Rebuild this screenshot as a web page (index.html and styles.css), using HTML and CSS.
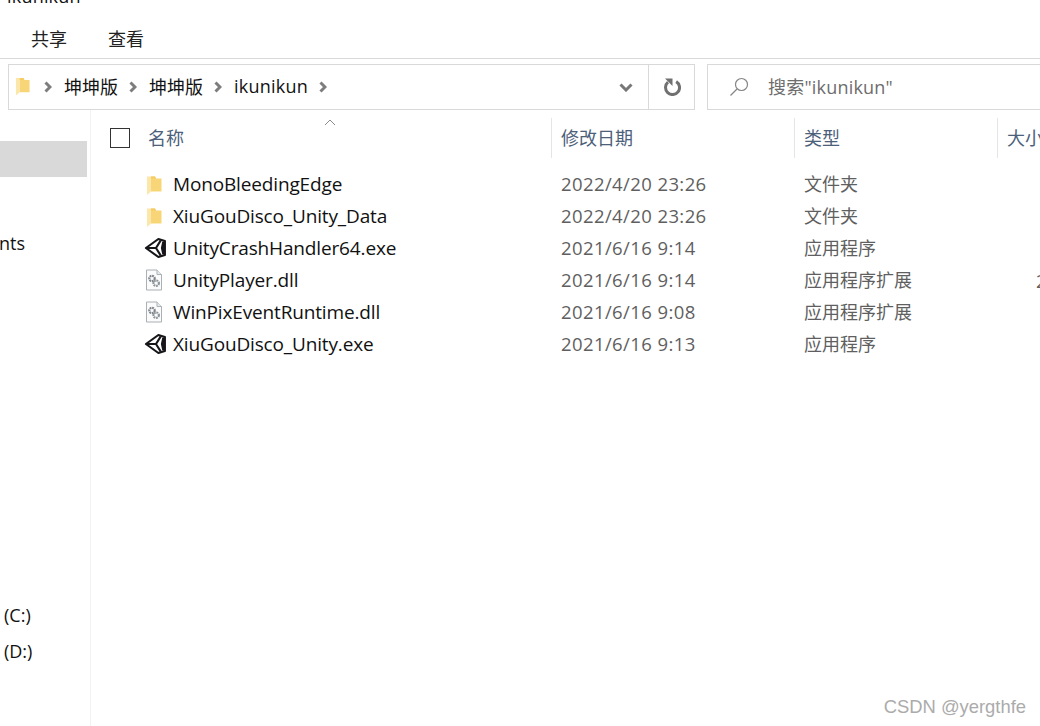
FILE: index.html
```html
<!DOCTYPE html>
<html lang="zh-CN">
<head>
<meta charset="utf-8">
<title>ikunikun</title>
<link rel="stylesheet" href="styles.css">
</head>
<body>
<svg class="defs" width="0" height="0" aria-hidden="true">
  <defs>
    <symbol id="folder" viewBox="0 0 16 20">
      <path d="M1 1 L5 1 L5 16 L1 19.5 Z" fill="#fbe7a9"/>
      <path d="M5 1 L9 1 L10 3 L15.5 3 L15.5 16 L5 16 Z" fill="#f8d577"/>
      <path d="M5 1 L9 1 L10 3 L5 3 Z" fill="#f6cb60"/>
    </symbol>
    <symbol id="unity" viewBox="0 0 24 22">
      <path d="M2 11 L15 1.6 L21.8 3.6 L21.8 18.4 L15 20.4 Z" fill="#fff" stroke="#15151a" stroke-width="2.2" stroke-linejoin="round"/>
      <path d="M2 11 H12.5 L17.5 3 M12.5 11 L17.5 19" fill="none" stroke="#15151a" stroke-width="2.2"/>
      <path d="M19 4.5 L21.8 3.6 L21.8 18.4 L19 17.5 L17.6 11 Z" fill="#15151a"/>
    </symbol>
    <symbol id="dll" viewBox="0 0 18 22">
      <path d="M1.5 1 H12 L16.5 5.5 V21 H1.5 Z" fill="#fbfbfb" stroke="#a9b0b6"/>
      <path d="M12 1 V5.5 H16.5" fill="#e8ebed" stroke="#a9b0b6"/>
      <circle cx="7" cy="9.5" r="2.7" fill="none" stroke="#7f858b" stroke-width="2.2" stroke-dasharray="1.8 .7"/>
      <circle cx="11.2" cy="14.2" r="2.7" fill="none" stroke="#8f959a" stroke-width="2.2" stroke-dasharray="1.8 .7"/>
    </symbol>
  </defs>
</svg>
<div class="window">
  <div class="titlebar"><span class="title-text">ikunikun</span></div>
  <nav class="ribbon">
    <span class="tab">共享</span>
    <span class="tab">查看</span>
  </nav>
  <div class="toolbar">
    <div class="address">
      <svg class="addr-folder"><use href="#folder"/></svg>
      <div class="crumbs">
        <svg class="chev" viewBox="0 0 8 12"><path d="M1.5 1.5 L6 6 L1.5 10.5" fill="none" stroke="#7d7d7d" stroke-width="3"/></svg>
        <span class="crumb">坤坤版</span>
        <svg class="chev" viewBox="0 0 8 12"><path d="M1.5 1.5 L6 6 L1.5 10.5" fill="none" stroke="#7d7d7d" stroke-width="3"/></svg>
        <span class="crumb">坤坤版</span>
        <svg class="chev" viewBox="0 0 8 12"><path d="M1.5 1.5 L6 6 L1.5 10.5" fill="none" stroke="#7d7d7d" stroke-width="3"/></svg>
        <span class="crumb crumb-latin">ikunikun</span>
        <svg class="chev" viewBox="0 0 8 12"><path d="M1.5 1.5 L6 6 L1.5 10.5" fill="none" stroke="#7d7d7d" stroke-width="3"/></svg>
      </div>
      <div class="addr-drop">
        <svg class="drop-icon" viewBox="0 0 14 9"><path d="M1.5 1.5 L7 7 L12.5 1.5" fill="none" stroke="#777" stroke-width="3"/></svg>
      </div>
      <div class="addr-refresh">
        <svg class="refresh-icon" viewBox="0 0 18 18"><path d="M5 4.2 A7 7 0 1 0 13.2 3.6" fill="none" stroke="#707070" stroke-width="3"/><path d="M2 .5 H9.5 V8 Z" fill="#707070"/></svg>
      </div>
    </div>
    <div class="search">
      <svg class="search-icon" viewBox="0 0 20 20"><circle cx="12.5" cy="7.5" r="6" fill="none" stroke="#858585" stroke-width="1.2"/><path d="M8 12 L1.5 18.5" stroke="#858585" stroke-width="1.3"/></svg>
      <span class="search-text">搜索"ikunikun"</span>
    </div>
  </div>
  <div class="body">
    <aside class="sidebar">
      <div class="side-selected"></div>
      <div class="side-item side-docs">nts</div>
      <div class="side-drives">
        <div class="side-item">(C:)</div>
        <div class="side-item">(D:)</div>
      </div>
    </aside>
    <main class="main">
      <div class="head">
        <div class="col-name head-cell">
          <span class="checkbox"></span>
          <span class="head-label">名称</span>
          <svg class="sort" viewBox="0 0 12 7"><path d="M1 6 L6 1 L11 6" fill="none" stroke="#8a8a8a" stroke-width="1"/></svg>
        </div>
        <div class="head-cell head-sep"><span class="head-label">修改日期</span></div>
        <div class="head-cell head-sep"><span class="head-label">类型</span></div>
        <div class="head-cell head-sep"><span class="head-label">大小</span></div>
      </div>
      <div class="rows">
        <div class="row"><div class="name"><svg class="ic-folder"><use href="#folder"/></svg><span>MonoBleedingEdge</span></div><div class="meta">2022/4/20 23:26</div><div class="type">文件夹</div><div class="size"></div></div>
        <div class="row"><div class="name"><svg class="ic-folder"><use href="#folder"/></svg><span>XiuGouDisco_Unity_Data</span></div><div class="meta">2022/4/20 23:26</div><div class="type">文件夹</div><div class="size"></div></div>
        <div class="row"><div class="name"><svg class="ic-unity"><use href="#unity"/></svg><span>UnityCrashHandler64.exe</span></div><div class="meta">2021/6/16 9:14</div><div class="type">应用程序</div><div class="size"></div></div>
        <div class="row"><div class="name"><svg class="ic-dll"><use href="#dll"/></svg><span>UnityPlayer.dll</span></div><div class="meta">2021/6/16 9:14</div><div class="type">应用程序扩展</div><div class="size">2</div></div>
        <div class="row"><div class="name"><svg class="ic-dll"><use href="#dll"/></svg><span>WinPixEventRuntime.dll</span></div><div class="meta">2021/6/16 9:08</div><div class="type">应用程序扩展</div><div class="size"></div></div>
        <div class="row"><div class="name"><svg class="ic-unity"><use href="#unity"/></svg><span>XiuGouDisco_Unity.exe</span></div><div class="meta">2021/6/16 9:13</div><div class="type">应用程序</div><div class="size"></div></div>
      </div>
    </main>
  </div>
  <div class="watermark">CSDN @yergthfe</div>
</div>
</body>
</html>
```
FILE: styles.css
```css
* { box-sizing: border-box; }
html, body { margin: 0; padding: 0; background: #fff; }
body {
  width: 1040px;
  height: 726px;
  overflow: hidden;
  font-family: "Open Sans", "Noto Sans CJK SC", sans-serif;
  font-size: 18px;
  color: #111;
}
.defs { position: absolute; }
.window { position: relative; width: 1040px; height: 726px; overflow: hidden; }

.titlebar { height: 20px; position: relative; overflow: hidden; }
.title-text { position: absolute; left: 7px; top: -16px; line-height: 25px; letter-spacing: .2px; }

.ribbon {
  height: 39px;
  display: flex;
  align-items: center;
  gap: 41px;
  padding: 0 0 0 31px;
  border-bottom: 1px solid #d9d9d9;
}
.tab { font-size: 18px; color: #222; line-height: 38px; }

.toolbar {
  height: 46px;
  margin-top: 5px;
  display: flex;
  padding-left: 8px;
}
.address {
  width: 687px;
  height: 46px;
  flex: none;
  border: 1px solid #d9d9d9;
  display: flex;
  align-items: center;
}
.addr-folder { width: 15px; height: 21px; margin-left: 6px; margin-bottom: 2px; flex: none; }
.crumbs { flex: 1; display: flex; align-items: center; padding-left: 14px; padding-bottom: 2px; }
.chev { width: 8px; height: 12px; flex: none; margin-top: 2px; }
.crumb { margin: 0 11px 0 12px; font-size: 18px; color: #111; }
.crumb-latin { letter-spacing: .25px; }
.addr-drop { width: 46px; height: 44px; display: flex; align-items: center; justify-content: center; flex: none; padding-left: 1px; padding-top: 1px; }
.drop-icon { width: 14px; height: 9px; }
.addr-refresh { width: 46px; height: 44px; border-left: 1px solid #d9d9d9; display: flex; align-items: center; justify-content: center; flex: none; }
.refresh-icon { width: 18px; height: 18px; }
.search {
  width: 340px;
  height: 46px;
  margin-left: 12px;
  flex: none;
  border: 1px solid #d9d9d9;
  display: flex;
  align-items: center;
  padding-left: 21px;
}
.search-icon { width: 20px; height: 20px; flex: none; }
.search-text { margin-left: 19px; margin-bottom: 2px; color: #6d6d6d; font-size: 18px; letter-spacing: .2px; }

.body { display: flex; height: 616px; }
.sidebar { width: 91px; flex: none; border-right: 1px solid #f2f2f2; display: flex; flex-direction: column; }
.side-selected { width: 87px; height: 36px; margin-top: 31px; background: #d9d9d9; }
.side-item { font-size: 18px; height: 36px; line-height: 36px; }
.side-docs { margin-top: 48px; margin-left: -1px; }
.side-drives { margin-top: 336px; padding-left: 4px; }

.main { flex: 1; min-width: 0; }
.head { display: grid; grid-template-columns: 460px 243px 203px 60px; height: 59px; padding-top: 8px; }
.head-cell { position: relative; height: 40px; display: flex; align-items: center; padding-left: 9px; }
.col-name { padding-left: 19px; }
.head-sep { border-left: 1px solid #e5e5e5; }
.checkbox { width: 20px; height: 20px; border: 1px solid #333; flex: none; }
.head-label { color: #4c607a; font-size: 18px; white-space: nowrap; margin-bottom: 3px; }
.col-name .head-label { margin-left: 18px; }
.sort { position: absolute; left: 233px; top: 1px; width: 12px; height: 7px; }

.rows { margin-top: -1px; }
.row { display: grid; grid-template-columns: 460px 243px 203px 60px; height: 32px; align-items: center; }
.name { display: flex; align-items: center; padding-left: 53px; position: relative; font-size: 19px; letter-spacing: -.15px; color: #111; white-space: nowrap; }
.name svg { position: absolute; }
.ic-folder { left: 55px; width: 16px; height: 21px; margin-top: 2px; }
.ic-unity { left: 53px; width: 23px; height: 22px; }
.ic-dll { left: 54px; width: 18px; height: 22px; }
.name span { margin-left: 29px; }
.meta { padding-left: 10px; color: #5f5f5f; font-size: 18.5px; letter-spacing: .4px; white-space: nowrap; margin-bottom: 1px; }
.type { padding-left: 10px; color: #5f5f5f; font-size: 18px; white-space: nowrap; margin-bottom: 2px; }
.size { padding-left: 39px; color: #5f5f5f; font-size: 18.5px; }

.watermark {
  position: absolute;
  right: 14px;
  bottom: 8px;
  font-family: "Liberation Sans", sans-serif;
  font-size: 18.4px;
  color: #ababab;
}
```
